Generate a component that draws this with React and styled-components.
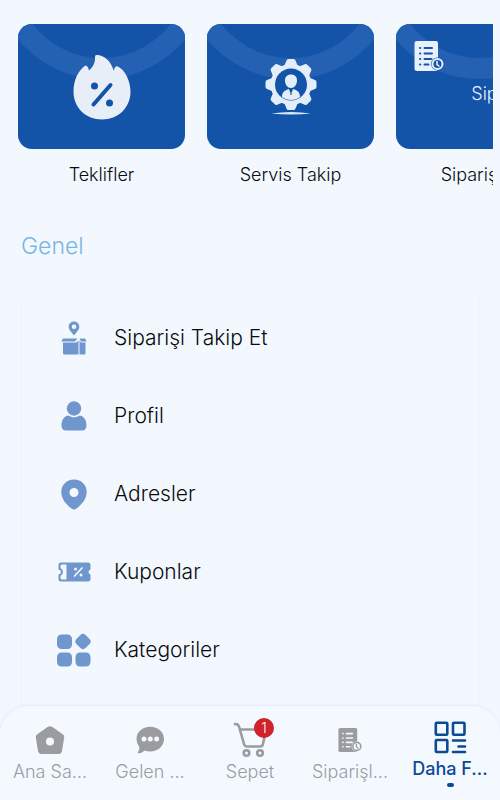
import React from "react";
import styled, { createGlobalStyle } from "styled-components";

const GlobalStyle = createGlobalStyle`
  * { box-sizing: border-box; }
  body {
    margin: 0;
    background: #f3f8ff;
    color: #0b0b0d;
    font-family: Inter, "Liberation Sans", sans-serif;
    font-weight: 350;
  }
  button { font: inherit; color: inherit; background: none; border: 0; padding: 0; cursor: pointer; }
  a { color: inherit; text-decoration: none; }
  svg { display: block; flex: none; }
`;

const Screen = styled.div`
  height: 100vh;
  display: flex;
  flex-direction: column;
  overflow: hidden;
`;

const Content = styled.main`
  flex: 1;
  min-height: 0;
  overflow: hidden;
  padding-top: 24px;
`;

const CardStrip = styled.section`
  display: flex;
  gap: 22px;
  margin: 0 7px 0 18px;
  overflow: hidden;
`;

const CardItem = styled.button`
  flex: none;
  width: 167px;
  display: flex;
  flex-direction: column;
  align-items: center;
  gap: 13px;
`;

const CardFace = styled.span`
  position: relative;
  width: 100%;
  height: 125px;
  border-radius: 14px;
  overflow: hidden;
  background: #1354a9;
  display: grid;
  place-items: center;
`;

const Ring = styled.svg`
  position: absolute;
  inset: 0;
`;

const CardIcon = styled.span`
  position: relative;
`;

const ListCard = styled.span`
  position: relative;
  width: 100%;
  height: 100%;
  padding: 17px 14px 16px 18px;
  display: flex;
  flex-direction: column;
  gap: 11px;
  color: #e8f0fb;
  font-size: 18px;
  font-weight: 300;
  line-height: 24px;
  text-align: right;
`;

const CardLabel = styled.span`
  font-size: 18px;
  line-height: 26px;
`;

const SectionTitle = styled.h2`
  margin: 42px 21px 0;
  font-size: 23px;
  line-height: 32px;
  font-weight: 350;
  color: #79b5e4;
`;

const MenuPanel = styled.nav`
  margin: 19px 20px 0 21px;
  padding: 17px 0 80px;
  border: 1px solid #eef4fc;
  border-top-color: transparent;
  border-radius: 18px;
`;

const MenuRow = styled.a`
  display: flex;
  align-items: center;
  gap: 20px;
  height: 78px;
  padding-left: 32px;
  color: #6f96cd;
`;

const MenuIcon = styled.span`
  width: 40px;
  display: flex;
  justify-content: center;
`;

const MenuLabel = styled.span`
  color: #0b0b0d;
  font-size: 21px;
  line-height: 30px;
`;

const TabBar = styled.nav`
  flex: none;
  height: 94px;
  display: grid;
  grid-template-columns: repeat(5, 1fr);
  background: #f4f9ff;
  border-radius: 28px 28px 0 0;
  box-shadow: 0 -1px 3px #e2eaf4;
  z-index: 1;
`;

const Tab = styled.button`
  position: relative;
  display: flex;
  flex-direction: column;
  align-items: center;
  padding-top: ${(p) => (p.$active ? 11 : 14)}px;
  color: ${(p) => (p.$active ? "#0c4a93" : "#9b9c9f")};
  min-width: 0;
`;

const TabIcon = styled.span`
  position: relative;
  height: 40px;
  display: grid;
  place-items: center;
`;

const Badge = styled.span`
  position: absolute;
  top: -2px;
  right: -6px;
  width: 20px;
  height: 20px;
  border-radius: 50%;
  background: #cf2229;
  color: #fff;
  font-size: 14px;
  line-height: 20px;
  text-align: center;
`;

const TabLabel = styled.span`
  font-size: 18px;
  line-height: 24px;
  white-space: nowrap;
  font-weight: ${(p) => (p.$active ? 450 : 350)};
`;

const ActiveDot = styled.span`
  width: 7px;
  height: 4px;
  margin-top: 2px;
  border-radius: 2px;
  background: #0c4a93;
`;

const CardRing = () => (
  <Ring width="167" height="125" viewBox="0 0 167 125" aria-hidden="true">
    <circle cx="83.500" cy="-53" r="97.500" fill="none" stroke="#2561b2" strokeWidth="21" />
  </Ring>
);

const FlameIcon = () => (
  <svg width="58" height="66" viewBox="0 0 58 66" aria-hidden="true">
    <path fill="#e8eef7" d="M22.500 1.200C30 .2 38 7 40.600 16.500c.8-2.500 2-4.500 3.600-4.300C51.500 15 57.500 26.500 57.500 37.500 57.500 54 45 65.500 29 65.500S.5 54 .5 37.500C.5 26.500 5 16.500 12.500 11.500c2 .2 3 2.800 3.500 5C19.500 13.500 22.500 9 22 3z" />
    <g fill="#1354a9">
      <circle cx="21.500" cy="32" r="3.500" />
      <circle cx="36.500" cy="49" r="3.500" />
    </g>
    <path d="M37.500 31 20.500 50.500" stroke="#1354a9" strokeWidth="4" strokeLinecap="round" />
  </svg>
);

const GearIcon = () => (
  <svg width="52" height="56" viewBox="0 0 52 56" aria-hidden="true">
    <g fill="#e4eefb" transform="translate(26 25.500)">
      {[0, 45, 90, 135, 180, 225, 270, 315].map((a) => (
        <path key={a} transform={`rotate(${a})`} d="M-7-18-4.500-24Q-4-25.500-2.500-25.500h5Q4-25.500 4.500-24L7-18z" />
      ))}
      <circle r="20.500" />
    </g>
    <circle cx="26" cy="25.500" r="16" fill="#1354a9" />
    <path fill="#e4eefb" d="M26 15.500c4 0 6 2.500 6 6 0 4-2.500 7.500-6 7.500s-6-3.500-6-7.500c0-3.500 2-6 6-6zM17 38c0-5 3-7 7-8l1 3h2l1-3c4 1 7 3 7 8-5 4-13 4-18 0z" />
    <path d="m25.300 30 .7 1.500.7-1.500-.7 6z" fill="#1354a9" stroke="#1354a9" strokeWidth=".6" />
    <path d="M6 54.500Q26 51.500 46 54.500 26 56.500 6 54.500z" fill="#d5e9ff" />
  </svg>
);

const OrderListIcon = ({ size, cut }) => (
  <svg width={size} height={size} viewBox="0 0 30 30" aria-hidden="true">
    <path fill="currentColor" d="M3 0h19q2 0 2 2v26q0 2-2 2H3q-2.500 0-2.500-2V2Q.5 0 3 0z" />
    <g stroke={cut} strokeWidth="2" strokeLinecap="round">
      <path d="M6 7h.3M10.500 7h7.500M6 12.500h.3M10.500 12.500h7.500M6 18h.3M10.500 18h7M6 23.500h.3M10.500 23.500h4" />
    </g>
    <circle cx="23.500" cy="23" r="6.500" fill={cut} />
    <circle cx="23.500" cy="23" r="5" fill={cut} stroke="currentColor" strokeWidth="2" />
    <path d="M23 20v3.500l2.500 2" fill="none" stroke="currentColor" strokeWidth="1.600" />
  </svg>
);

const BoxPinIcon = () => (
  <svg width="26" height="34" viewBox="0 0 26 34" fill="currentColor" aria-hidden="true">
    <path fillRule="evenodd" d="M13 .5c3.200 0 5.300 2.300 5.300 5.200C18.300 9 15.500 11 13 14.500 10.500 11 7.700 9 7.700 5.700 7.700 2.800 9.800.5 13 .5zm0 3a2.300 2.300 0 1 0 0 4.600 2.300 2.300 0 0 0 0-4.600z" />
    <path d="M2 17.500h14.500L14 20.500H.3zM18.500 17.500H24l1.800 3H20zM2 21.500h13.500l2-2V33.500H3.200Q2 33.500 2 32.300zM18.500 19.500l1.500 2h4.500v10.800q0 1.200-1.200 1.200h-4.800z" />
  </svg>
);

const UserIcon = () => (
  <svg width="26" height="30" viewBox="0 0 26 30" fill="currentColor" aria-hidden="true">
    <circle cx="13" cy="7.500" r="7.200" />
    <path d="M7.500 14.500c3.300 2.400 7.700 2.400 11 0 4.500.5 7 4.500 7 10 0 3-1.500 5-4.500 5H5c-3 0-4.500-2-4.500-5 0-5.500 2.500-9.500 7-10z" />
  </svg>
);

const PinIcon = () => (
  <svg width="26" height="31" viewBox="0 0 26 31" fill="currentColor" aria-hidden="true">
    <path fillRule="evenodd" d="M13 .5c7.500 0 12.700 5.500 12.700 12.500 0 7-5 12.500-10.200 16.500q-2.500 1.800-5 0C5.300 25.500.3 20 .3 13 .3 6 5.500.5 13 .5zm0 8.500a4.500 4.500 0 1 0 0 9 4.500 4.500 0 0 0 0-9z" />
  </svg>
);

const CouponIcon = () => (
  <svg width="33" height="20" viewBox="0 0 33 20" aria-hidden="true">
    <path fill="currentColor" d="M3 .5h27q2.500 0 2.500 2.500v4.500q-2 .5-2 2.500t2 2.500V17q0 2.500-2.500 2.500H3Q.5 19.500.5 17v-4.500Q3 12 3 10T.5 7.500V3Q.5.500 3 .5z" />
    <path fill="#f3f8ff" d="M4 2.500h4.500v15H4Q2.500 17.500 2.500 16v-2Q5 12.500 5 10T2.500 6V4q0-1.500 1.500-1.500z" />
    <path d="m24 6-7.500 8" stroke="#f3f8ff" strokeWidth="1.700" strokeLinecap="round" />
    <circle cx="17.500" cy="7" r="1.500" fill="#f3f8ff" />
    <circle cx="23" cy="13" r="1.500" fill="#f3f8ff" />
  </svg>
);

const CategoriesIcon = () => (
  <svg width="34" height="34" viewBox="0 0 34 34" fill="currentColor" aria-hidden="true">
    <rect x="0" y="1.500" width="15" height="14.500" rx="4.500" />
    <rect x="0" y="19.500" width="15" height="14" rx="4.500" />
    <rect x="18.500" y="19.500" width="15" height="14" rx="4.500" />
    <rect x="19.500" y="2" width="13" height="13" rx="4" transform="rotate(45 26 8.500)" />
  </svg>
);

const HomeIcon = () => (
  <svg width="30" height="30" viewBox="0 0 30 30" fill="currentColor" aria-hidden="true">
    <path fillRule="evenodd" d="M12.500 2Q15 .5 17.500 2L28 9.500q1.500 1.200 1.200 3L27 26q-.6 3-3.500 3h-17Q3.600 29 3 26L.8 12.500q-.3-1.800 1.200-3zM15 12.500a4 4 0 1 0 0 8 4 4 0 0 0 0-8z" />
  </svg>
);

const ChatIcon = () => (
  <svg width="30" height="28" viewBox="0 0 30 28" aria-hidden="true">
    <path fill="currentColor" d="M15 .8C23 .8 29 6 29 13s-6 12.500-14 12.500c-2 0-3.700-.4-5.200-1Q6.500 27.500 2.500 27.200 4.800 24 4.300 21 1.500 17.500 1.500 13C1.500 6 7.500.8 15 .8z" />
    <g fill="#f4f9ff">
      <circle cx="9" cy="13" r="2.500" />
      <circle cx="15.300" cy="13" r="2.500" />
      <circle cx="21.600" cy="13" r="2.500" />
    </g>
  </svg>
);

const CartIcon = () => (
  <svg width="36" height="36" viewBox="0 0 36 36" fill="none" stroke="currentColor" strokeWidth="2.600" strokeLinecap="round" strokeLinejoin="round" aria-hidden="true">
    <path d="M3 2q3-.3 4 2.500L12 22q.7 2.500 3 2.500h13q2.500 0 3-2.500l3-14.500H8.500" />
    <circle cx="14.500" cy="31" r="2.800" />
    <circle cx="28" cy="31" r="2.800" />
  </svg>
);

const MoreIcon = () => (
  <svg width="33" height="33" viewBox="0 0 33 33" fill="none" stroke="currentColor" strokeWidth="2.600" strokeLinecap="round" strokeLinejoin="round" aria-hidden="true">
    <rect x="1.800" y="1.800" width="11.500" height="12" rx="1" />
    <rect x="19" y="1.800" width="11.500" height="12" rx="1" />
    <rect x="1.800" y="19" width="11.500" height="12" rx="1" />
    <path d="M19 19.500h12M24.500 25.500h6.500M19 31h12" />
  </svg>
);

const menu = [
  { label: "Siparişi Takip Et", Icon: BoxPinIcon },
  { label: "Profil", Icon: UserIcon },
  { label: "Adresler", Icon: PinIcon },
  { label: "Kuponlar", Icon: CouponIcon },
  { label: "Kategoriler", Icon: CategoriesIcon },
];

const tabs = [
  { label: "Ana Sa...", icon: <HomeIcon /> },
  { label: "Gelen ...", icon: <ChatIcon /> },
  { label: "Sepet", icon: <CartIcon />, badge: 1 },
  { label: "Siparişl...", icon: <OrderListIcon size={24} cut="#f4f9ff" /> },
  { label: "Daha F...", icon: <MoreIcon />, active: true },
];

export default function App() {
  return (
    <Screen>
      <GlobalStyle />
      <Content>
        <CardStrip>
          <CardItem>
            <CardFace>
              <CardRing />
              <CardIcon><FlameIcon /></CardIcon>
            </CardFace>
            <CardLabel>Teklifler</CardLabel>
          </CardItem>
          <CardItem>
            <CardFace>
              <CardRing />
              <CardIcon><GearIcon /></CardIcon>
            </CardFace>
            <CardLabel>Servis Takip</CardLabel>
          </CardItem>
          <CardItem>
            <CardFace>
              <CardRing />
              <ListCard>
                <OrderListIcon size={30} cut="#1354a9" />
                <span>Siparişler</span>
              </ListCard>
            </CardFace>
            <CardLabel>Siparişler</CardLabel>
          </CardItem>
        </CardStrip>
        <SectionTitle>Genel</SectionTitle>
        <MenuPanel>
          {menu.map(({ label, Icon }) => (
            <MenuRow key={label} href="#">
              <MenuIcon><Icon /></MenuIcon>
              <MenuLabel>{label}</MenuLabel>
            </MenuRow>
          ))}
        </MenuPanel>
      </Content>
      <TabBar>
        {tabs.map((t) => (
          <Tab key={t.label} $active={t.active}>
            <TabIcon>
              {t.icon}
              {t.badge && <Badge>{t.badge}</Badge>}
            </TabIcon>
            <TabLabel $active={t.active}>{t.label}</TabLabel>
            {t.active && <ActiveDot />}
          </Tab>
        ))}
      </TabBar>
    </Screen>
  );
}
